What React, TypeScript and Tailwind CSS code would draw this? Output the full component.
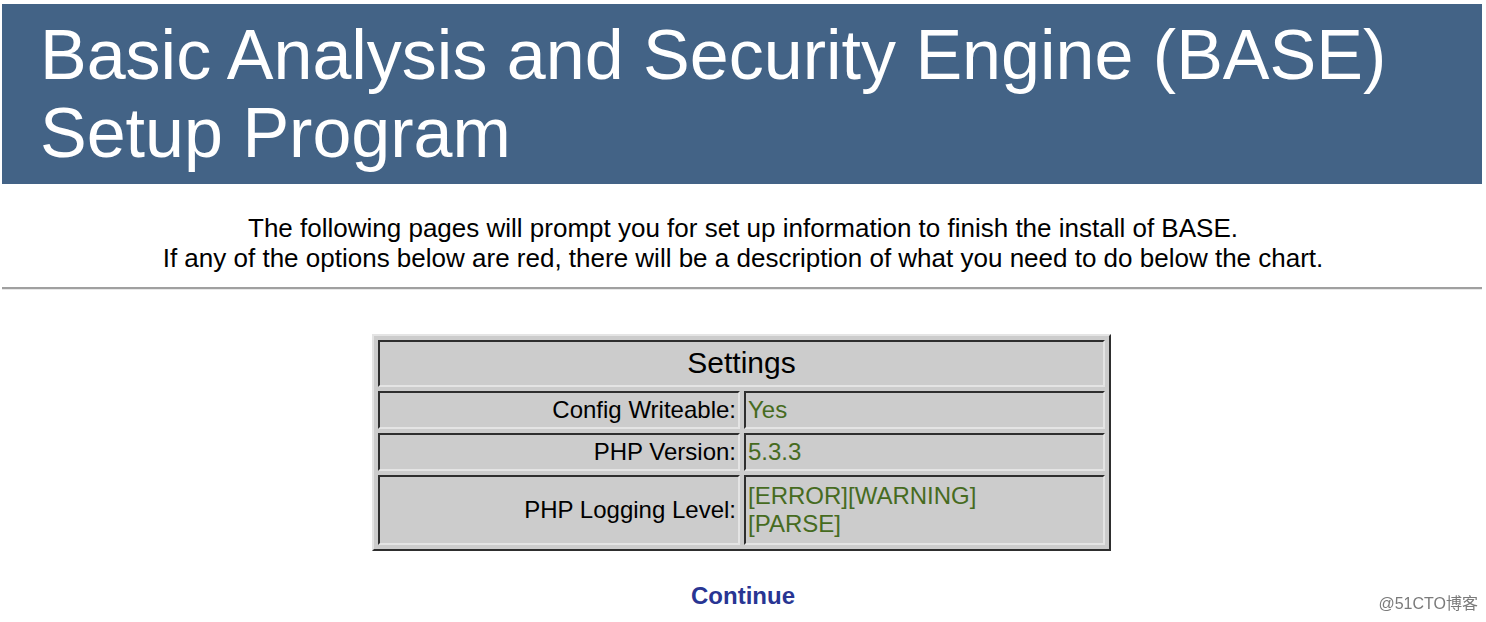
import React from 'react';

const rows = [
  { label: 'Config Writeable:', value: ['Yes'], tall: false },
  { label: 'PHP Version:', value: ['5.3.3'], tall: false },
  { label: 'PHP Logging Level:', value: ['[ERROR][WARNING]', '[PARSE]'], tall: true },
];

const cell =
  'border-2 border-t-[#2e2e2e] border-l-[#2e2e2e] border-r-[#e4e4e4] border-b-[#e4e4e4] align-middle text-[24px] leading-[28px]';

export default function App() {
  return (
    <div className="min-h-[622px] w-full bg-white pt-1 font-['Liberation_Sans',Arial,sans-serif] text-black">
      {/* Title bar */}
      <div className="ml-[2px] mr-[4px] bg-[#436386] px-[38px] pt-[12px] pb-[12px]">
        <h1 className="text-[70px] leading-[78px] font-normal text-white">
          Basic Analysis and Security Engine (BASE)
          <br />
          Setup Program
        </h1>
      </div>

      {/* Intro */}
      <div className="mt-[29px] text-center text-[26px] leading-[30px]">
        <p>The following pages will prompt you for set up information to finish the install of BASE.</p>
        <p>If any of the options below are red, there will be a description of what you need to do below the chart.</p>
      </div>

      <div className="ml-[2px] mr-[4px] mt-[14px] h-[3px] border-t-2 border-b border-t-[#a0a0a0] border-b-[#e8e8e8]" />

      {/* Settings table */}
      <div className="mt-[44px] flex justify-center">
        <table className="ml-[-3px] w-[739px] border-separate border-spacing-[4px] border-2 border-t-[#e4e4e4] border-l-[#e4e4e4] border-r-[#2e2e2e] border-b-[#2e2e2e] bg-[#cccccc]">
          <tbody>
            <tr>
              <td
                colSpan={2}
                className="border-2 border-t-[#2e2e2e] border-l-[#2e2e2e] border-r-[#e4e4e4] border-b-[#e4e4e4] pt-[4px] pb-[5px] text-center text-[30px] leading-[34px]"
              >
                Settings
              </td>
            </tr>
            {rows.map((row) => (
              <tr key={row.label}>
                <td className={`${cell} w-[362px] px-[2px] text-right ${row.tall ? 'py-[5px]' : 'py-[3px]'}`}>
                  {row.label}
                </td>
                <td className={`${cell} px-[2px] text-left text-[#466b1f] ${row.tall ? 'py-[5px]' : 'py-[3px]'}`}>
                  {row.value.map((v) => (
                    <div key={v}>{v}</div>
                  ))}
                </td>
              </tr>
            ))}
          </tbody>
        </table>
      </div>

      {/* Continue */}
      <div className="mt-[31px] text-center">
        <a href="#" className="text-[24px] leading-[28px] font-bold text-[#283593]">
          Continue
        </a>
      </div>

      <div className="fixed right-[8px] bottom-[6px] text-[16px] text-[#7a7a7a] font-['Liberation_Sans','Noto_Sans_CJK_SC',sans-serif]">
        @51CTO博客
      </div>
    </div>
  );
}
